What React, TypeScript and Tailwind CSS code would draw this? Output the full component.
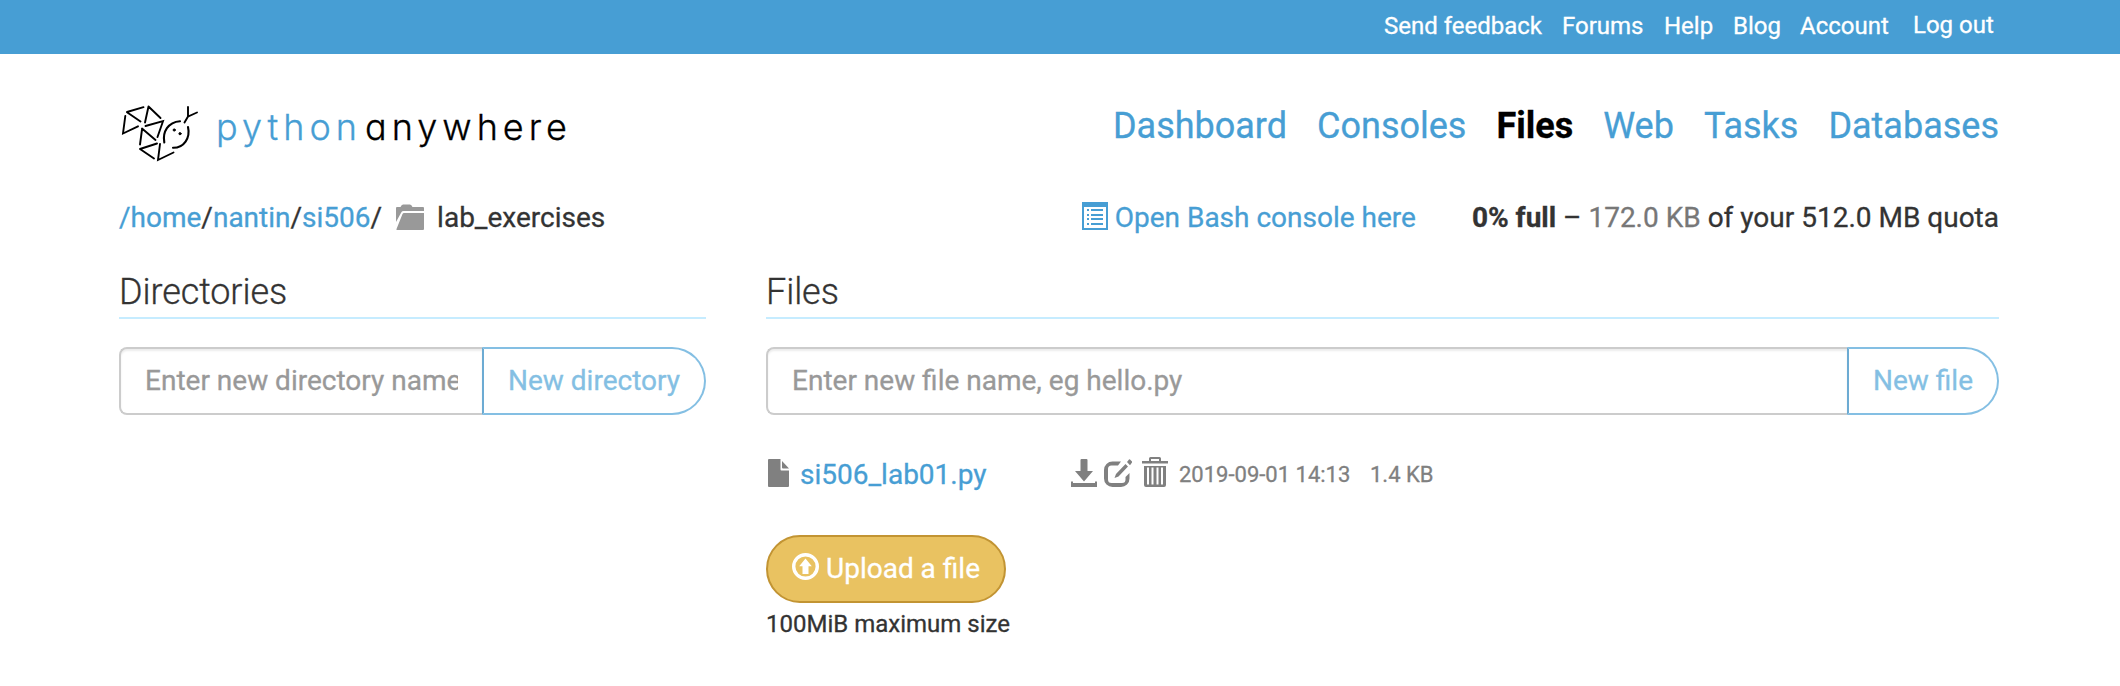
import React from "react";

const topLinks = [
  { label: "Send feedback", box: "w-[158px]" },
  { label: "Forums", box: "w-[82px]" },
  { label: "Help", box: "w-[49px]" },
  { label: "Blog", box: "w-[47px]" },
  { label: "Account", box: "w-[89px]" },
];

function SnakeMark() {
  return (
    <svg className="mt-px h-[58px] w-[80px] shrink-0" viewBox="0 0 80 58" fill="none" stroke="#000" strokeWidth="1.9" strokeLinecap="round">
      <path d="M8 8 24.5 3.2M8 8.3 21.5 17.5M6.3 12 4 29.5 19 22.3M29.5 2.5 26 18.5M29.5 2.5 41.5 14M26.5 22 44 17.2 38.5 33M23 25.5 21 40.5M23 24.5 36.5 36M21 45 38 39.5M21 45 35 54.5M41 40 39 56 54.5 48.5" />
      <path d="M45.3 38.5C43.3 28 49 18 61 17.2M69 23C71.5 34 65 44 54 43.8" strokeWidth="2.1" />
      <path d="M69 3V12.500L78 8.500M69 12.500 65.500 18.500" />
      <circle cx="55.2" cy="26" r="1.1" fill="#000" strokeWidth="1" />
      <circle cx="61" cy="29.7" r="1.1" fill="#000" strokeWidth="1" />
    </svg>
  );
}

function ListIcon() {
  return (
    <svg className="h-7 w-[26px] shrink-0" viewBox="0 0 26 28" fill="#479ed4">
      <path fillRule="evenodd" d="M0 0h26v28H0zM2 5h22v21H2z" />
      <path d="M5 7h2v2H5zM9 7h12v2H9zM5 12h2v2H5zM9 12h12v2H9zM5 16h2v2H5zM9 16h12v2H9zM5 21h2v2H5zM9 21h12v2H9z" />
    </svg>
  );
}

function FolderIcon() {
  return (
    <svg className="h-[26px] w-7 shrink-0" viewBox="0 0 28 26" fill="#999">
      <path d="M0 18V4a1 1 0 0 1 1-1h3.500Q5.500.500 7 .500h7q1.500 0 2.500 2.500H27a1 1 0 0 1 1 1V7H7.500Q6 7 5.500 8z" />
      <path d="M8 9h20v16a1 1 0 0 1-1 1H1Q0 26 .500 25L6.500 10Q7 9 8 9z" />
    </svg>
  );
}

function FileIcon() {
  return (
    <svg className="h-7 w-[22px] shrink-0" viewBox="0 0 22 28" fill="#808080">
      <path d="M0 1a1 1 0 0 1 1-1h11.500v10.500a1 1 0 0 0 1 1H21V27a1 1 0 0 1-1 1H1a1 1 0 0 1-1-1z" />
      <path d="M14 2 21 9.500h-6a1 1 0 0 1-1-1z" />
    </svg>
  );
}

function DownloadIcon() {
  return (
    <svg className="h-7 w-[26px] shrink-0" viewBox="0 0 26 28" fill="#808080">
      <path d="M9.500 1a1 1 0 0 1 1-1h5a1 1 0 0 1 1 1v11H22l-9 10.500L4 12h5.500z" />
      <path d="M0 22.500h2V24h22v-1.500h2V28H0z" />
    </svg>
  );
}

function EditIcon() {
  return (
    <svg className="h-7 w-7 shrink-0" viewBox="0 0 28 28" fill="#808080">
      <path d="M17 2.500H8.500A8.500 8.500 0 0 0 0 11v8.500A8.500 8.500 0 0 0 8.500 28h8.500a8.500 8.500 0 0 0 8.500-8.500V14l-4 4v2.500a3.500 3.500 0 0 1-3.500 3.500H7.500A3.500 3.500 0 0 1 4 20.500V10a3.500 3.500 0 0 1 3.500-3.500H14z" />
      <path d="M21.500 5 24 7.500 14.500 17.500l-4 1.500L12 15zM23 3l2-2.500q.500-.500 1 0L28 2.500q.300.500 0 1L26 6.200z" />
    </svg>
  );
}

function TrashIcon() {
  return (
    <svg className="h-[30px] w-[26px] shrink-0" viewBox="0 0 26 30" fill="#808080">
      <path fillRule="evenodd" d="M0 4h7V1.500A1.500 1.500 0 0 1 8.500 0h9A1.500 1.500 0 0 1 19 1.500V4h7v2.500H0zM9 2v2h8V2z" />
      <path fillRule="evenodd" d="M2 9h22v19a2 2 0 0 1-2 2H4a2 2 0 0 1-2-2zM5 10.500v17h2v-17zM9.500 10.500v17h2v-17zM14.500 10.500v17h2v-17zM19 10.500v17h2v-17z" />
    </svg>
  );
}

function UploadIcon() {
  return (
    <svg className="h-[27px] w-[27px] shrink-0" viewBox="0 0 27 27" fill="#fff">
      <circle cx="13.5" cy="13.5" r="11.8" fill="none" stroke="#fff" strokeWidth="3.4" />
      <path d="M13.500 5.500 19.800 13.200h-3.300V21h-6V13.200H7.200z" />
    </svg>
  );
}

export default function App() {
  return (
    <div className="h-[686px] w-[2120px] overflow-hidden bg-white font-[Roboto,sans-serif] text-[28px] leading-10 text-[#333] [-webkit-text-stroke:0.3px]">
      <header className="flex h-[54px] justify-end bg-[#479ed4] pr-[125px] text-2xl leading-[52px] whitespace-nowrap text-white">
        <nav className="flex gap-5">
          {topLinks.map((l) => (
            <a key={l.label} className={l.box}>{l.label}</a>
          ))}
        </nav>
        <a className="ml-[24px] w-[82px] leading-[50px]">Log out</a>
      </header>

      <div className="flex h-[134px] items-start justify-between pr-[121px] pl-[119px]">
        <div className="flex pt-[49px]">
          <SnakeMark />
          <div className="ml-[17px] flex font-[Inter,sans-serif] text-[36px] leading-[48px] font-light [font-feature-settings:'cv11']">
            <span className="w-[149px] tracking-[5px] text-[#479ed4]">python</span>
            <span className="tracking-[5px] text-black">anywhere</span>
          </div>
        </div>
        <nav className="flex gap-[30px] pt-[47px] text-[36px] leading-[51px] text-[#479ed4]">
          <a>Dashboard</a>
          <a>Consoles</a>
          <a className="font-bold text-black">Files</a>
          <a>Web</a>
          <a>Tasks</a>
          <a>Databases</a>
        </nav>
      </div>

      <div className="flex h-[70px] justify-between pt-[10px] pr-[121px] pl-[119px] whitespace-pre">
        <div className="flex">
          <span><a className="text-[#479ed4]">/home</a>/<a className="text-[#479ed4]">nantin</a>/<a className="text-[#479ed4]">si506</a>/</span>
          <span className="mr-[13px] ml-[14px] pt-[6px]"><FolderIcon /></span>
          <span>lab_exercises</span>
        </div>
        <div className="flex">
          <a className="flex text-[#479ed4]">
            <span className="mr-[7px] pt-1"><ListIcon /></span>
            Open Bash console here
          </a>
          <span className="ml-[56px]"><b>0% full</b> – <span className="text-[#777]">172.0 KB</span> of your 512.0 MB quota</span>
        </div>
      </div>

      <main className="flex gap-[60px] pr-[121px] pl-[119px]">
        <section className="w-[587px]">
          <h2 className="h-[61px] border-b-2 border-[#c6ecff] pt-[14px] text-[36px] leading-[40px] font-light tracking-[-0.1px]">Directories</h2>
          <form className="mt-7 flex h-[68px]">
            <input
              className="w-[363px] rounded-l-lg border-2 border-r-0 border-[#ccc] px-6 shadow-[inset_0_2px_2px_rgba(0,0,0,0.075)] placeholder:text-[#999]"
              placeholder="Enter new directory name"
            />
            <button className="flex-1 rounded-r-[34px] border-2 border-[#84bfe3] border-l-[#6cabd3] text-[#84bfe3]">New directory</button>
          </form>
        </section>
        <section className="flex-1">
          <h2 className="h-[61px] border-b-2 border-[#c6ecff] pt-[14px] text-[36px] leading-[40px] font-light tracking-[-0.1px]">Files</h2>
          <form className="mt-7 flex h-[68px]">
            <input
              className="flex-1 rounded-l-lg border-2 border-r-0 border-[#ccc] px-6 shadow-[inset_0_2px_2px_rgba(0,0,0,0.075)] placeholder:text-[#999]"
              placeholder="Enter new file name, eg hello.py"
            />
            <button className="w-[152px] rounded-r-[34px] border-2 border-[#84bfe3] border-l-[#6cabd3] text-[#84bfe3]">New file</button>
          </form>
          <div className="mt-10 flex h-10 whitespace-nowrap text-[#808080]">
            <span className="ml-[2px] pt-1"><FileIcon /></span>
            <a className="ml-[10px] w-[271px] text-[#479ed4]">si506_lab01.py</a>
            <span className="pt-1"><DownloadIcon /></span>
            <span className="ml-[7px] pt-1"><EditIcon /></span>
            <span className="ml-[10px] pt-[2px]"><TrashIcon /></span>
            <span className="ml-[11px] w-[191px] text-[22px]">2019-09-01 14:13</span>
            <span className="text-[22px]">1.4 KB</span>
          </div>
          <button className="mt-10 flex h-[68px] w-[240px] rounded-[34px] border-2 border-[#c29433] bg-[#e9c261] pt-[12px] pl-6 whitespace-nowrap text-white">
            <span className="mr-[7px] pt-[4px]"><UploadIcon /></span>
            Upload a file
          </button>
          <p className="text-2xl leading-[42px]">100MiB maximum size</p>
        </section>
      </main>
    </div>
  );
}
